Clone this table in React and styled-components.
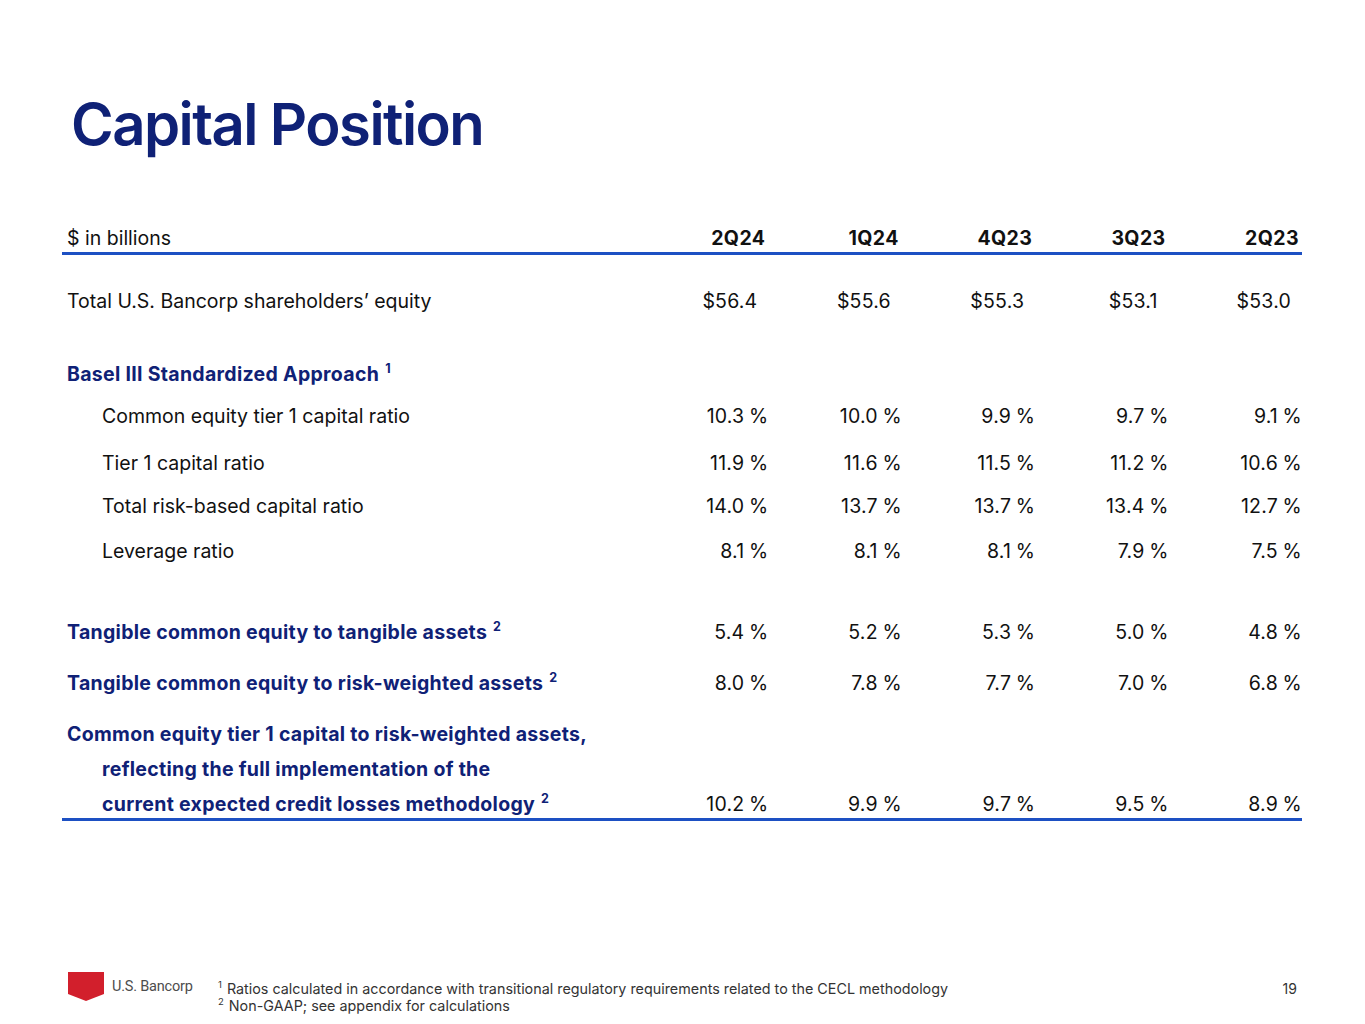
import React from "react";
import styled, { createGlobalStyle } from "styled-components";

const Global = createGlobalStyle`
  html, body { margin: 0; padding: 0; background: #ffffff; }
  body { font-family: Inter, "Noto Sans", sans-serif; color: #111111; }
`;

const Page = styled.div`
  width: 1365px;
  height: 1024px;
  display: flex;
  flex-direction: column;
  overflow: hidden;
  background: #fff;
`;

const Title = styled.h1`
  margin: 95px 0 0 71px;
  font-size: 58px;
  line-height: 58px;
  font-weight: 600;
  letter-spacing: -1.55px;
  color: #0f2176;
`;

const Table = styled.div`
  margin: 66px 0 0 62px;
  width: 1240px;
  display: flex;
  flex-direction: column;
`;

const Grid = styled.div`
  display: grid;
  grid-template-columns: 573px repeat(5, 1fr);
  align-items: center;
`;

const HeaderRow = styled(Grid)`
  height: 28px;
  padding-top: 5px;
  border-bottom: 3px solid #1d50c3;
`;

const HeaderLabel = styled.div`
  padding-left: 5px;
  font-size: 19.5px;
  color: #111;
`;

const HeaderCell = styled.div`
  text-align: right;
  padding-right: 3px;
  font-size: 19.5px;
  font-weight: 700;
  letter-spacing: 0.4px;
  color: #111;
`;

const Row = styled(Grid)`
  margin-top: ${(p) => p.$mt}px;
  height: 36px;
  line-height: 36px;
`;

const MultiRow = styled(Grid)`
  margin-top: ${(p) => p.$mt}px;
  height: 101px;
  line-height: 35px;
  align-items: start;
  border-bottom: 3px solid #1d50c3;
`;

const Label = styled.div`
  padding-left: ${(p) => (p.$indent ? 40 : 5)}px;
  font-size: 19.5px;
  font-weight: ${(p) => (p.$bold ? 700 : 400)};
  letter-spacing: ${(p) => (p.$bold ? 0.3 : 0)}px;
  color: ${(p) => (p.$bold ? "#0f2176" : "#111")};
  white-space: nowrap;
`;

const IndentLine = styled.span`
  display: block;
  padding-left: 35px;
`;

const Sup = styled.sup`
  font-size: 12.5px;
  line-height: 0;
  margin-left: 6px;
  vertical-align: 8px;
`;

const Value = styled.div`
  text-align: right;
  font-size: 19.5px;
  letter-spacing: 0.2px;
  word-spacing: -1px;
  color: #111;
  padding-right: ${(p) => (p.$dollar ? 11 : 0)}px;
`;

const LastLineValue = styled(Value)`
  margin-top: 70px;
`;

const Footer = styled.div`
  margin-top: auto;
  padding: 0 68px 10px 68px;
  display: flex;
  align-items: flex-start;
`;

const Brand = styled.div`
  display: flex;
  align-items: center;
  gap: 8px;
  width: 150px;
`;

const BrandName = styled.span`
  font-family: Roboto, "Liberation Sans", sans-serif;
  font-size: 14.5px;
  color: #4d4d4d;
  letter-spacing: -0.2px;
`;

const Notes = styled.div`
  margin-top: 8px;
  font-size: 14.35px;
  line-height: 17px;
  color: #333;
  flex: 1;
`;

const NoteSup = styled.sup`
  font-size: 9.5px;
  line-height: 0;
  vertical-align: 6px;
  margin-right: 5px;
`;

const PageNum = styled.div`
  margin-top: 8px;
  font-size: 14px;
  line-height: 17px;
  color: #333;
`;

const cols = ["2Q24", "1Q24", "4Q23", "3Q23", "2Q23"];

const rows = [
  { mt: 37, label: "Basel III Standardized Approach", bold: true, sup: "1", vals: null },
  { mt: 6, label: "Common equity tier 1 capital ratio", indent: true, vals: ["10.3", "10.0", "9.9", "9.7", "9.1"] },
  { mt: 11, label: "Tier 1 capital ratio", indent: true, vals: ["11.9", "11.6", "11.5", "11.2", "10.6"] },
  { mt: 7, label: "Total risk-based capital ratio", indent: true, vals: ["14.0", "13.7", "13.7", "13.4", "12.7"] },
  { mt: 9, label: "Leverage ratio", indent: true, vals: ["8.1", "8.1", "8.1", "7.9", "7.5"] },
  { mt: 45, label: "Tangible common equity to tangible assets", bold: true, sup: "2", vals: ["5.4", "5.2", "5.3", "5.0", "4.8"] },
  { mt: 15, label: "Tangible common equity to risk-weighted assets", bold: true, sup: "2", vals: ["8.0", "7.8", "7.7", "7.0", "6.8"] },
];

function Logo() {
  return (
    <svg width="36" height="29" viewBox="0 0 36 29">
      <polygon points="0,0 36,0 36,22 18,29 0,22" fill="#d21f2c" />
    </svg>
  );
}

export default function App() {
  return (
    <Page>
      <Global />
      <Title>Capital Position</Title>
      <Table>
        <HeaderRow>
          <HeaderLabel>$ in billions</HeaderLabel>
          {cols.map((c) => (
            <HeaderCell key={c}>{c}</HeaderCell>
          ))}
        </HeaderRow>
        <Row $mt={28}>
          <Label>Total U.S. Bancorp shareholders’ equity</Label>
          {["$56.4", "$55.6", "$55.3", "$53.1", "$53.0"].map((v, i) => (
            <Value key={i} $dollar>
              {v}
            </Value>
          ))}
        </Row>
        {rows.map((r, idx) => (
          <Row key={idx} $mt={r.mt}>
            <Label $bold={r.bold} $indent={r.indent}>
              {r.label}
              {r.sup && <Sup>{r.sup}</Sup>}
            </Label>
            {r.vals &&
              r.vals.map((v, i) => <Value key={i}>{v} %</Value>)}
          </Row>
        ))}
        <MultiRow $mt={16}>
          <Label $bold>
            Common equity tier 1 capital to risk-weighted assets,
            <IndentLine>reflecting the full implementation of the</IndentLine>
            <IndentLine>
              current expected credit losses methodology<Sup>2</Sup>
            </IndentLine>
          </Label>
          {["10.2", "9.9", "9.7", "9.5", "8.9"].map((v, i) => (
            <LastLineValue key={i}>{v} %</LastLineValue>
          ))}
        </MultiRow>
      </Table>
      <Footer>
        <Brand>
          <Logo />
          <BrandName>U.S. Bancorp</BrandName>
        </Brand>
        <Notes>
          <div>
            <NoteSup>1</NoteSup>Ratios calculated in accordance with transitional regulatory requirements related to the CECL methodology
          </div>
          <div>
            <NoteSup>2</NoteSup>Non-GAAP; see appendix for calculations
          </div>
        </Notes>
        <PageNum>19</PageNum>
      </Footer>
    </Page>
  );
}
